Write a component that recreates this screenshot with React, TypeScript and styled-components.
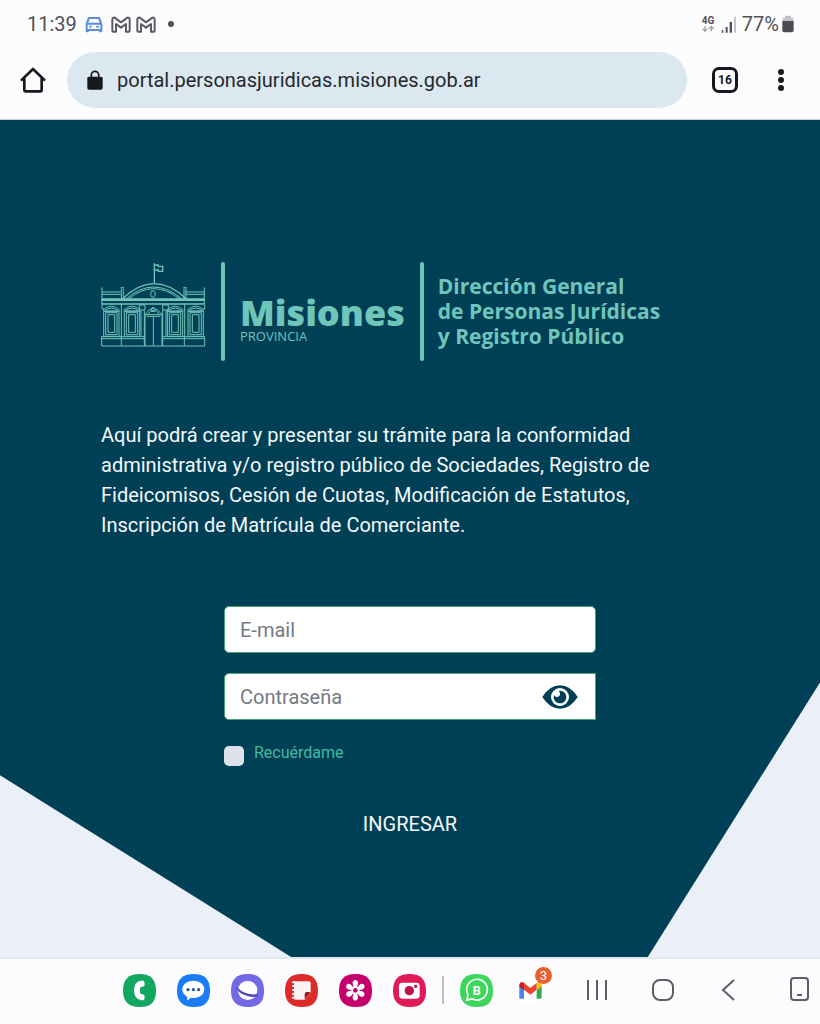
import React from "react";
import styled, { createGlobalStyle } from "styled-components";

const color = {
  chrome: "#fcfcff",
  pill: "#dce8f0",
  navy: "#004057",
  page: "#ebeff8",
  mint: "#70c5ba",
  green: "#45b8a0",
  ink: "#16191c",
  status: "#505154",
  placeholder: "#747a82",
  nav: "#5d5e63",
};

const GlobalStyle = createGlobalStyle`
  *, *::before, *::after { box-sizing: border-box; }
  body {
    margin: 0;
    background: ${color.page};
    font-family: Roboto, "Liberation Sans", sans-serif;
  }
  button, input { font: inherit; }
  svg { display: block; flex: none; }
`;

const Screen = styled.div`
  display: flex;
  flex-direction: column;
  min-height: 100vh;
`;

const StatusBar = styled.div`
  display: flex;
  align-items: center;
  justify-content: space-between;
  height: 48px;
  padding: 0 26px 0 27px;
  background: ${color.chrome};
  color: ${color.status};
  font-size: 20px;
  line-height: 24px;
`;

const StatusGroup = styled.div<{ $gap: number }>`
  display: flex;
  align-items: center;
  gap: ${(p) => p.$gap}px;
`;

const AddressBar = styled.header`
  display: flex;
  align-items: center;
  gap: 20px;
  padding: 4px 25px 11px 19px;
  background: ${color.chrome};
  border-bottom: 1px solid #c3d0d8;
  color: ${color.ink};
`;

const IconButton = styled.button<{ $width?: number }>`
  display: flex;
  align-items: center;
  justify-content: center;
  flex: none;
  width: ${(p) => p.$width ?? 28}px;
  height: 40px;
  padding: 0;
  border: 0;
  background: none;
  color: inherit;
  cursor: pointer;
`;

const UrlPill = styled.label`
  display: flex;
  align-items: center;
  gap: 14px;
  flex: 1;
  height: 56px;
  padding: 0 20px;
  border-radius: 28px;
  background: ${color.pill};
`;

const UrlInput = styled.input`
  flex: 1;
  min-width: 0;
  padding: 0;
  border: 0;
  outline: 0;
  background: none;
  color: #24282d;
  font-size: 20px;
  line-height: 28px;
`;

const BrowserActions = styled.div`
  display: flex;
  align-items: center;
  gap: 28px;
  margin-left: 4px;
`;

const TabCount = styled.span`
  display: flex;
  align-items: center;
  justify-content: center;
  width: 26px;
  height: 26px;
  border: 3px solid ${color.ink};
  border-radius: 7px;
  font-size: 12px;
  font-weight: 700;
  line-height: 16px;
`;

const Main = styled.main`
  flex: 1;
  padding: 142px 101px 100px;
  background: ${color.navy};
  clip-path: polygon(0 0, 100% 0, 100% 67.2%, 79% 100%, 35.5% 100%, 0 78.3%);
`;

const Brand = styled.div`
  display: flex;
  align-items: stretch;
  gap: 14px;
  height: 99px;
  color: ${color.mint};
`;

const Divider = styled.span`
  flex: none;
  width: 4px;
  border-radius: 2px;
  background: ${color.mint};
`;

const Province = styled.div`
  display: flex;
  flex-direction: column;
  justify-content: flex-end;
  padding: 0 1px 18px;
  font-family: "Open Sans", "Noto Sans", sans-serif;
`;

const ProvinceName = styled.span`
  font-size: 36px;
  font-weight: 800;
  line-height: 32px;
`;

const ProvinceKind = styled.span`
  font-size: 13px;
  line-height: 14px;
`;

const Office = styled.h1`
  align-self: center;
  margin: 0;
  font-family: "Open Sans", "Noto Sans", sans-serif;
  font-size: 21px;
  font-weight: 700;
  line-height: 25px;
  white-space: nowrap;
`;

const Intro = styled.p`
  margin: 59px 0 66px;
  color: #f4f8fa;
  font-size: 20px;
  line-height: 30px;
`;

const Form = styled.form`
  display: flex;
  flex-direction: column;
  gap: 20px;
  width: 100%;
  max-width: 372px;
  margin: 0 auto;
`;

const Field = styled.div<{ $square?: boolean }>`
  display: flex;
  align-items: center;
  height: 47px;
  padding: 0 15px;
  border: 1px solid #4c9f70;
  border-radius: ${(p) => (p.$square ? "5px 0 0 5px" : "5px")};
  background: #fff;
`;

const TextInput = styled.input`
  flex: 1;
  min-width: 0;
  padding: 0;
  border: 0;
  outline: 0;
  background: none;
  color: ${color.navy};
  font-size: 20px;
  line-height: 30px;
  &::placeholder {
    color: ${color.placeholder};
    opacity: 1;
  }
`;

const Remember = styled.label`
  display: flex;
  align-items: flex-end;
  gap: 10px;
  color: ${color.green};
  font-size: 16px;
  line-height: 26px;
`;

const Checkbox = styled.input`
  appearance: none;
  width: 20px;
  height: 20px;
  margin: 6px 0 0;
  border-radius: 5px;
  background: #dfe2ea;
  &:checked {
    background: ${color.green};
  }
`;

const RememberText = styled.span`
  align-self: flex-start;
`;

const Submit = styled.button`
  align-self: center;
  margin-top: 20px;
  padding: 6px 12px;
  border: 0;
  background: none;
  color: #f4f8fa;
  font-size: 20px;
  line-height: 24px;
  cursor: pointer;
`;

const Taskbar = styled.footer`
  display: flex;
  align-items: center;
  justify-content: space-between;
  height: 67px;
  padding: 0 5px 3px 123px;
  border-top: 2px solid #e3e8ee;
  background: ${color.chrome};
  color: ${color.nav};
`;

const Apps = styled.div`
  display: flex;
  align-items: center;
  gap: 21px;
`;

const AppButton = styled.button`
  position: relative;
  width: 33px;
  height: 33px;
  padding: 0;
  border: 0;
  background: none;
  cursor: pointer;
`;

const AppSplit = styled.span`
  width: 2px;
  height: 28px;
  margin: 0 -5px;
  background: #c0c1c5;
`;

const Badge = styled.span`
  position: absolute;
  top: -7px;
  right: -5px;
  width: 17px;
  height: 17px;
  border-radius: 50%;
  background: #e8602c;
  color: #fff;
  font-size: 13px;
  line-height: 17px;
  text-align: center;
`;

const NavKeys = styled.nav`
  display: flex;
  align-items: center;
  gap: 42px;
`;

const CarIcon = () => (
  <svg width="18" height="17" viewBox="0 0 54 51">
    <path d="M12 3h30q3 0 4 3l6 18v22q0 3-3 3h-4q-3 0-3-4H12q0 4-3 4H5q-3 0-3-3V24L8 6q1-3 4-3Z" fill="#5a8edb" />
    <path d="M14 9h26l4 11H10ZM8 26h38v13H8Z" fill={color.chrome} />
    <path d="M13 32h7M34 32h7" stroke="#5a8edb" strokeWidth="6" />
  </svg>
);

const MailOutline = () => (
  <svg width="20" height="17" viewBox="0 0 60 51" fill="none" stroke="#5b5c60" strokeWidth="6" strokeLinejoin="round">
    <path d="M4 44V11Q4 4 11 5L30 19 49 5Q56 4 56 11V44Q56 47 53 47H45V24L30 35 15 24V47H7Q4 47 4 44Z" />
  </svg>
);

const NetworkIcon = () => (
  <svg width="15" height="18" viewBox="0 0 45 54">
    <text x="2" y="26" fontFamily="Roboto, sans-serif" fontSize="30" fontWeight="700" fill={color.status}>4G</text>
    <path d="M12 33v15M5 41l7 8 7-8M31 49V34M24 42l7-8 7 8" fill="none" stroke="#a5a6aa" strokeWidth="4" />
  </svg>
);

const SignalIcon = () => (
  <svg width="16" height="17" viewBox="0 0 48 51">
    <path d="M2 43h5v7H2zM14 33h6v17h-6zM26 18h7v32h-7z" fill={color.status} />
    <path d="M39 2h6v48h-6z" fill="#c3c3c7" />
  </svg>
);

const BatteryIcon = () => (
  <svg width="12" height="18" viewBox="0 0 36 54">
    <path d="M9 4Q9 2 12 2h12q3 0 3 2v4h3q5 0 5 6v6H1v-6q0-6 5-6h3Z" fill="#c2c2c6" />
    <path d="M1 18h34v28q0 6-6 6H7q-6 0-6-6Z" fill="#4d4d51" />
  </svg>
);

const HomeIcon = () => (
  <svg width="26" height="26" viewBox="0 0 78 78" fill="none" stroke="currentColor" strokeWidth="8" strokeLinejoin="round">
    <path d="M3 41 39 6l36 35" />
    <path d="M13 34v36q0 3 3 3h46q3 0 3-3V34" />
  </svg>
);

const LockIcon = () => (
  <svg width="16" height="20" viewBox="0 0 48 60">
    <path d="M13 24V15a11 11 0 0 1 22 0v9" fill="none" stroke={color.ink} strokeWidth="5" />
    <rect x="1" y="20" width="46" height="39" rx="5" fill={color.ink} />
  </svg>
);

const DotsIcon = () => (
  <svg width="6" height="24" viewBox="0 0 6 24" fill="currentColor">
    <circle cx="3" cy="4" r="3" />
    <circle cx="3" cy="12" r="3" />
    <circle cx="3" cy="20" r="3" />
  </svg>
);

const sideWindows = [41, 103, 232, 294];

const GovernmentHouse = () => (
  <svg width="106" height="86" viewBox="33 35 318 258" fill="none" stroke="currentColor" strokeWidth="3">
    <path d="M193 98V39M193 44h12v4h13v15h-13v-4h-12" strokeWidth="4" />
    <path d="M97 146q96-92 192 0" strokeWidth="4" />
    <path d="M108 146q82-72 168 0" />
    <path d="M115 146q76-62 154 0" />
    <ellipse cx="189" cy="131" rx="7" ry="10" />
    <path d="M36 111v50M36 125h56M36 132h56M92 112h10M94 114v32M100 114v32M343 111v50M286 125h57M286 132h57M280 112h10M282 114v32M288 114v32" />
    <path d="M34 146h310M34 150h310M34 161h310" strokeWidth="4" />
    <path d="M35 259v28h309v-28M34 259h129M218 259h126M34 265h129M218 265h126M94 259v28M283 259v28" />
    {sideWindows.map((x) => (
      <g key={x}>
        <path d={`M${x} 183h46v75h-46ZM${x + 6} 187h34v66h-34ZM${x + 13} 193h20v53h-20Z`} />
        <path d={`M${x - 2} 179q25-23 50 0M${x + 4} 180q19-13 38 0M${x - 2} 182h50`} />
      </g>
    ))}
    <path d="M94 162v96M148 164h17v15h-17ZM153 180v78M163 180v107M218 164h17v15h-17ZM218 180v107M228 180v78M284 162v96M36 163v13h6M344 163v13h-6" />
    <path d="M165 287v-94h51v94M170 198h40M190 198v89M165 193q25-38 51 0M174 191q16-22 34 0" />
    <circle cx="189" cy="178" r="6" />
  </svg>
);

const EyeIcon = () => (
  <svg width="36" height="24" viewBox="0 0 108 72">
    <path d="M1 36Q23 1 54 1t53 35Q85 71 54 71T1 36Z" fill={color.navy} />
    <circle cx="54" cy="36" r="27" fill="#fff" />
    <path d="M54 17a19 19 0 1 1-18 13q3 7 10 6 9-2 8-11-1-5-4-7Z" fill={color.navy} />
  </svg>
);

const Tile = ({ fill, children }: { fill: string; children: React.ReactNode }) => (
  <svg width="33" height="33" viewBox="0 0 99 99">
    <path d="M50 0C83 0 99 16 99 50S83 99 50 99 0 83 0 50 16 0 50 0Z" fill={fill} />
    {children}
  </svg>
);

const PhoneApp = () => (
  <Tile fill="#12a860">
    <path d="M55 20q7-1 9 4l1 8q0 6-6 6l-7 1q-3 10 0 21l8 1q5 1 5 6l-1 9q-2 4-9 3Q33 76 33 49T55 20Z" fill="#fff" />
  </Tile>
);

const MessagesApp = () => (
  <Tile fill="#1c7cf5">
    <path d="M49 20c19 0 33 11 33 26S68 72 49 72q-5 0-9-1-3 6-10 8 2-5 0-11-14-8-14-22c0-15 14-26 33-26Z" fill="#fff" />
    <g fill="#2a5aa8">
      <circle cx="33" cy="47" r="5" />
      <circle cx="49" cy="47" r="5" />
      <circle cx="65" cy="47" r="5" />
    </g>
  </Tile>
);

const InternetApp = () => (
  <Tile fill="#7369e6">
    <circle cx="50" cy="49" r="29" fill="#fff" />
    <path d="M23 31Q15 34 20 41q13 14 35 19 15 3 24-1l2 7q-12 5-29 1Q27 61 18 46q-5-10 5-15Z" fill="#5547b4" />
  </Tile>
);

const NotesApp = () => (
  <Tile fill="#dc2b28">
    <path d="M27 22h44q6 0 6 6v27L60 77H32q-5 0-5-5Z" fill="#f8f4f4" />
    <path d="M77 54H65q-6 0-6 6v17Z" fill="#a3151a" />
    <path d="M24 25h6M24 36h6M24 48h6M24 60h6M24 71h6" stroke="#f8f4f4" strokeWidth="6" strokeLinecap="round" />
  </Tile>
);

const petals = [0, 60, 120, 180, 240, 300];

const GalleryApp = () => (
  <Tile fill="#c6006b">
    {petals.map((angle) => (
      <path key={angle} d="M49 48Q39 30 41 25q2-7 8-7t8 7q2 5-8 23Z" fill="#fff" transform={`rotate(${angle} 49 49)`} />
    ))}
    <circle cx="49" cy="49" r="12" fill="#fff" />
    <circle cx="49" cy="49" r="7" fill="#c6006b" />
  </Tile>
);

const CameraApp = () => (
  <Tile fill="#e01b56">
    <rect x="18" y="26" width="62" height="48" rx="10" fill="#fff" />
    <circle cx="49" cy="50" r="14" fill="#c4104b" />
    <circle cx="68" cy="37" r="5" fill="#c4104b" />
  </Tile>
);

const BusinessChatApp = () => (
  <Tile fill="#3cd65c">
    <path d="M20 79l4-17a31 31 0 1 1 12 12Z" fill="none" stroke="#fff" strokeWidth="5" strokeLinejoin="round" />
    <text x="50" y="62" textAnchor="middle" fontFamily="Roboto, sans-serif" fontSize="38" fontWeight="700" fill="#fff">B</text>
  </Tile>
);

const GmailApp = () => (
  <svg width="33" height="33" viewBox="0 0 99 99">
    <circle cx="49" cy="49" r="48" fill="#fff" stroke="#f4f4f6" strokeWidth="2" />
    <path d="M16 34v40h14V44Z" fill="#4285f4" />
    <path d="M68 44v30h10q5 0 5-5V34Z" fill="#34a853" />
    <path d="M16 37v-5q1-9 9-8l7 4v21L16 38Z" fill="#c5221f" />
    <path d="M30 27 49 42 68 27v20L49 62 30 47Z" fill="#ea4335" />
    <path d="M68 27q15-9 15 7v4L68 48Z" fill="#fbbc04" />
  </svg>
);

const RecentsIcon = () => (
  <svg width="24" height="24" viewBox="0 0 24 24" stroke="currentColor" strokeWidth="2">
    <path d="M3 2v20M12 2v20M21 2v20" />
  </svg>
);

const HomeKeyIcon = () => (
  <svg width="24" height="24" viewBox="0 0 24 24" fill="none" stroke="currentColor" strokeWidth="2">
    <rect x="2" y="2" width="20" height="20" rx="7" />
  </svg>
);

const BackIcon = () => (
  <svg width="24" height="24" viewBox="0 0 24 24" fill="none" stroke="currentColor" strokeWidth="2">
    <path d="M17 2 6 12l11 10" />
  </svg>
);

const DeviceIcon = () => (
  <svg width="24" height="26" viewBox="0 0 24 26" fill="none" stroke="currentColor" strokeWidth="2">
    <rect x="4" y="1" width="17" height="22" rx="3" />
    <path d="M10 18h5" />
  </svg>
);

export default function App() {
  return (
    <Screen>
      <GlobalStyle />
      <StatusBar>
        <StatusGroup $gap={8}>
          <span>11:39</span>
          <CarIcon />
          <StatusGroup $gap={5}>
            <MailOutline />
            <MailOutline />
          </StatusGroup>
          <svg width="18" height="6" viewBox="0 0 18 6">
            <circle cx="7" cy="3" r="3" fill={color.status} />
          </svg>
        </StatusGroup>
        <StatusGroup $gap={5}>
          <NetworkIcon />
          <SignalIcon />
          <StatusGroup $gap={3}>
            <span>77%</span>
            <BatteryIcon />
          </StatusGroup>
        </StatusGroup>
      </StatusBar>
      <AddressBar>
        <IconButton type="button" aria-label="Inicio">
          <HomeIcon />
        </IconButton>
        <UrlPill>
          <LockIcon />
          <UrlInput aria-label="Dirección web" defaultValue="portal.personasjuridicas.misiones.gob.ar" />
        </UrlPill>
        <BrowserActions>
          <IconButton type="button" aria-label="Pestañas abiertas">
            <TabCount>16</TabCount>
          </IconButton>
          <IconButton type="button" aria-label="Más opciones">
            <DotsIcon />
          </IconButton>
        </BrowserActions>
      </AddressBar>
      <Main>
        <Brand>
          <GovernmentHouse />
          <Divider />
          <Province>
            <ProvinceName>Misiones</ProvinceName>
            <ProvinceKind>PROVINCIA</ProvinceKind>
          </Province>
          <Divider />
          <Office>
            Dirección General
            <br />
            de Personas Jurídicas
            <br />y Registro Público
          </Office>
        </Brand>
        <Intro>
          Aquí podrá crear y presentar su trámite para la conformidad administrativa y/o registro público de
          Sociedades, Registro de Fideicomisos, Cesión de Cuotas, Modificación de Estatutos, Inscripción de Matrícula
          de Comerciante.
        </Intro>
        <Form onSubmit={(event) => event.preventDefault()}>
          <Field>
            <TextInput type="email" aria-label="E-mail" placeholder="E-mail" />
          </Field>
          <Field $square>
            <TextInput type="password" aria-label="Contraseña" placeholder="Contraseña" />
            <IconButton type="button" $width={40} aria-label="Mostrar contraseña">
              <EyeIcon />
            </IconButton>
          </Field>
          <Remember>
            <Checkbox type="checkbox" />
            <RememberText>Recuérdame</RememberText>
          </Remember>
          <Submit type="submit">INGRESAR</Submit>
        </Form>
      </Main>
      <Taskbar>
        <Apps>
          <AppButton type="button" aria-label="Teléfono"><PhoneApp /></AppButton>
          <AppButton type="button" aria-label="Mensajes"><MessagesApp /></AppButton>
          <AppButton type="button" aria-label="Internet"><InternetApp /></AppButton>
          <AppButton type="button" aria-label="Notas"><NotesApp /></AppButton>
          <AppButton type="button" aria-label="Galería"><GalleryApp /></AppButton>
          <AppButton type="button" aria-label="Cámara"><CameraApp /></AppButton>
          <AppSplit />
          <AppButton type="button" aria-label="WhatsApp Business"><BusinessChatApp /></AppButton>
          <AppButton type="button" aria-label="Gmail">
            <GmailApp />
            <Badge>3</Badge>
          </AppButton>
        </Apps>
        <NavKeys>
          <IconButton type="button" $width={24} aria-label="Recientes"><RecentsIcon /></IconButton>
          <IconButton type="button" $width={24} aria-label="Pantalla principal"><HomeKeyIcon /></IconButton>
          <IconButton type="button" $width={24} aria-label="Atrás"><BackIcon /></IconButton>
          <IconButton type="button" $width={32} aria-label="Dispositivo"><DeviceIcon /></IconButton>
        </NavKeys>
      </Taskbar>
    </Screen>
  );
}
